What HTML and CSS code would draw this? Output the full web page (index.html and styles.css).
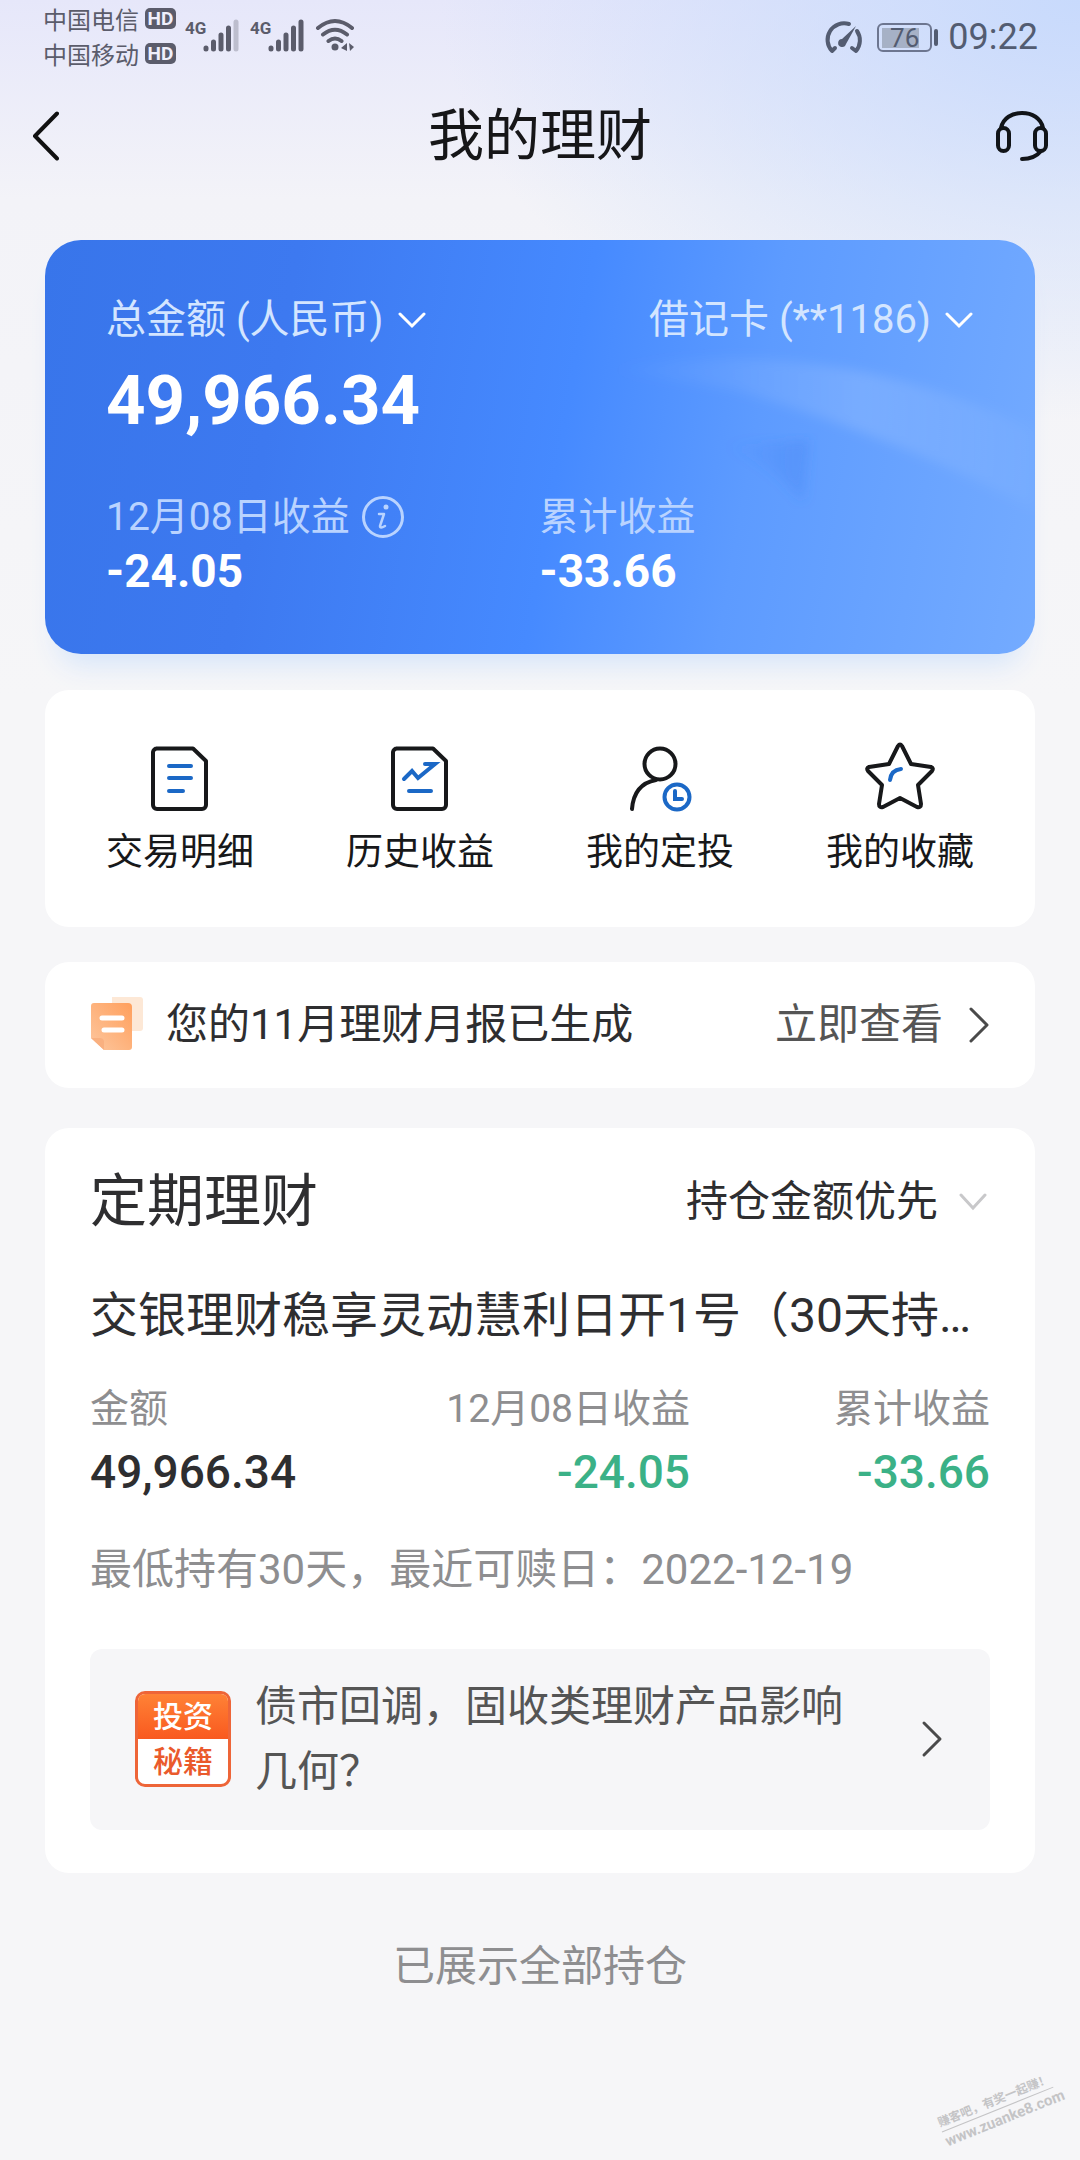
FILE: index.html
```html
<!DOCTYPE html>
<html lang="zh-CN">
<head>
<meta charset="utf-8">
<meta name="viewport" content="width=device-width, initial-scale=1">
<title>我的理财</title>
<link rel="stylesheet" href="styles.css">
</head>
<body>
<div class="status">
  <div class="carriers">
    <div class="carrier">中国电信 <span class="hd">HD</span></div>
    <div class="carrier">中国移动 <span class="hd">HD</span></div>
  </div>
  <div class="signals">
    <svg width="56" height="36" viewBox="0 0 56 36" aria-hidden="true">
      <text x="0" y="16" class="net">4G</text>
      <g stroke="#5b5c6b" stroke-width="5" stroke-linecap="round"><path d="M21 30v1M28.500 24v7M36 17v14M43.500 10v21"/><path d="M51 4v27" opacity=".3"/></g>
    </svg>
    <svg width="56" height="36" viewBox="0 0 56 36" aria-hidden="true">
      <text x="0" y="16" class="net">4G</text>
      <path d="M21 30v1M28.500 24v7M36 17v14M43.500 10v21M51 4v27" stroke="#5b5c6b" stroke-width="5" stroke-linecap="round"/>
    </svg>
    <svg width="42" height="36" viewBox="0 0 42 36" aria-hidden="true">
      <path d="M3 10Q20 -4 37 10M8 16.500Q20 7 32 16.500M13.500 23Q20 18 26.500 23" fill="none" stroke="#5b5c6b" stroke-width="4" stroke-linecap="round"/>
      <circle cx="20" cy="29" r="3.500" fill="#5b5c6b"/>
      <path d="M32 25v8l-6-3zM34 25l5 4-4 4z" fill="#5b5c6b"/>
    </svg>
  </div>
  <div class="power">
    <svg width="38" height="34" viewBox="0 0 38 34" aria-hidden="true">
      <path d="M24 4A16.500 16.500 0 0 0 7 31l3-3M32 11a16.500 16.500 0 0 1-1 20l-4-3" fill="none" stroke="#535c71" stroke-width="4" stroke-linecap="round" stroke-linejoin="round"/>
      <path d="M31 6L21 24a4 4 0 1 1-4-5z" fill="#535c71"/>
    </svg>
    <span class="battery"><span class="level">76</span></span>
    <span class="clock">09:22</span>
  </div>
</div>

<header class="top">
  <button class="icon-btn" aria-label="返回">
    <svg width="28" height="52" viewBox="0 0 28 52"><path d="M26 3.500L4 26l22 22.500" fill="none" stroke="#111" stroke-width="4" stroke-linecap="round" stroke-linejoin="round"/></svg>
  </button>
  <h1 class="title">我的理财</h1>
  <button class="icon-btn support" aria-label="客服">
    <svg width="54" height="52" viewBox="0 0 54 52"><g fill="none" stroke="#111418" stroke-width="4" stroke-linecap="round"><rect x="3" y="18" width="11" height="23" rx="5.500"/><rect x="40" y="18" width="11" height="23" rx="5.500"/><path d="M6 18C8 8 17 3 27 3s19 5 21 15M46 41c-4 5-11 8-19 8"/></g></svg>
  </button>
</header>

<main class="page">
  <section class="hero">
    <svg class="hero-art" viewBox="0 0 990 414" preserveAspectRatio="none" aria-hidden="true">
      <defs>
        <linearGradient id="beam" x1="0" x2="1"><stop offset="0" stop-color="#fff" stop-opacity="0"/><stop offset=".6" stop-color="#fff" stop-opacity=".13"/><stop offset="1" stop-color="#fff" stop-opacity=".03"/></linearGradient>
        <linearGradient id="shade" x1="0" x2="1"><stop offset="0" stop-color="#3c7df0" stop-opacity="0"/><stop offset="1" stop-color="#3c7df0" stop-opacity=".3"/></linearGradient>
        <filter id="soft"><feGaussianBlur stdDeviation="6"/></filter>
      </defs>
      <path d="M560 130Q780 90 990 190V270Q860 200 690 150Z" fill="url(#beam)" filter="url(#soft)"/>
      <path d="M680 206L764 200 758 262Q730 226 680 206Z" fill="url(#shade)" filter="url(#soft)"/>
    </svg>
    <div class="hero-row">
      <label class="pick"><select class="pick-field" aria-label="币种"><option>总金额 (人民币)</option></select>
        <svg width="28" height="18" viewBox="0 0 28 18"><path d="M2 3l12 12L26 3" fill="none" stroke="#fff" stroke-width="3" stroke-linecap="round"/></svg></label>
      <label class="pick"><select class="pick-field" aria-label="银行卡"><option>借记卡 (**1186)</option></select>
        <svg width="28" height="18" viewBox="0 0 28 18"><path d="M2 3l12 12L26 3" fill="none" stroke="#fff" stroke-width="3" stroke-linecap="round"/></svg></label>
    </div>
    <div class="total">49,966.34</div>
    <dl class="gains">
      <div><dt class="gain-name">12月08日收益
        <button class="icon-btn" aria-label="收益说明"><svg width="42" height="42" viewBox="0 0 42 42"><circle cx="21" cy="21" r="19.500" fill="none" stroke="#b9d3ff" stroke-width="3"/><circle cx="24" cy="11" r="2.500" fill="#b9d3ff"/><path d="M17 18h5l-4 12q0 3 5 0" fill="none" stroke="#b9d3ff" stroke-width="2.500" stroke-linecap="round" stroke-linejoin="round"/></svg></button></dt>
        <dd class="gain-value">-24.05</dd></div>
      <div><dt class="gain-name">累计收益</dt><dd class="gain-value">-33.66</dd></div>
    </dl>
  </section>

  <nav class="card actions">
    <a class="action" href="#">
      <svg width="72" height="72" viewBox="0 0 72 72"><path d="M12 6.500H49L62 19V63a4 4 0 0 1-4 4H13a4 4 0 0 1-4-4V10a4 4 0 0 1 4-3.500" fill="none" stroke="#17181a" stroke-width="4" stroke-linejoin="round"/><path d="M25 24h22M25 36h22M25 49h14" stroke="#1b68c6" stroke-width="4" stroke-linecap="round"/></svg>
      交易明细</a>
    <a class="action" href="#">
      <svg width="72" height="72" viewBox="0 0 72 72"><path d="M12 6.500H49L62 19V63a4 4 0 0 1-4 4H13a4 4 0 0 1-4-4V10a4 4 0 0 1 4-3.500" fill="none" stroke="#17181a" stroke-width="4" stroke-linejoin="round"/><path d="M20 37l8-8 6 7 17-14H41M25 49h22" fill="none" stroke="#1b68c6" stroke-width="4" stroke-linecap="round"/></svg>
      历史收益</a>
    <a class="action" href="#">
      <svg width="72" height="72" viewBox="0 0 72 72"><circle cx="36" cy="22" r="15.500" fill="none" stroke="#17181a" stroke-width="4"/><path d="M32 38Q10 42 8 67" fill="none" stroke="#17181a" stroke-width="4" stroke-linecap="round"/><circle cx="53" cy="55" r="12.500" fill="none" stroke="#1b68c6" stroke-width="4"/><path d="M51 49v8h7" fill="none" stroke="#1b68c6" stroke-width="4" stroke-linecap="round"/></svg>
      我的定投</a>
    <a class="action" href="#">
      <svg width="72" height="72" viewBox="0 0 72 72"><path d="M34 4Q36 1 38 4L47 22 67 25Q70 26 68 29L54 43 57 62Q57 66 53 65L36 56 19 65Q15 66 15 62L18 43 4 29Q2 26 5 25L25 22Z" fill="none" stroke="#17181a" stroke-width="4" stroke-linejoin="round"/><path d="M26 38q1-10 11-11" fill="none" stroke="#1b68c6" stroke-width="4" stroke-linecap="round"/></svg>
      我的收藏</a>
  </nav>

  <a class="card report" href="#">
    <svg width="54" height="56" viewBox="0 0 54 56" aria-hidden="true">
      <defs><linearGradient id="paper" x1="1" y1="0" x2="0" y2="1"><stop offset="0" stop-color="#ff9f5c"/><stop offset="1" stop-color="#fdc79f"/></linearGradient></defs>
      <path d="M22 0h28a3 3 0 0 1 3 3v28a3 3 0 0 1-3 3H22z" fill="#fde8d6"/>
      <path d="M4 6h34a4 4 0 0 1 4 4v40a3 3 0 0 1-3 3H14L1 41V9a3 3 0 0 1 3-3z" fill="url(#paper)"/>
      <path d="M1 41h9q3 0 4 3v9z" fill="#f9b080"/>
      <path d="M12 21h20M14 33h18" stroke="#fff" stroke-width="5" stroke-linecap="round"/>
    </svg>
    <span class="report-text">您的11月理财月报已生成</span>
    <span class="report-go">立即查看</span>
    <svg width="22" height="38" viewBox="0 0 22 38" aria-hidden="true"><path d="M3 3l16 16L3 35" fill="none" stroke="#4a4a4a" stroke-width="3" stroke-linecap="round" stroke-linejoin="round"/></svg>
  </a>

  <section class="card holdings">
    <div class="holdings-head">
      <h2 class="section-title">定期理财</h2>
      <label class="pick"><select class="pick-field sort" aria-label="排序"><option>持仓金额优先</option></select>
        <svg width="28" height="18" viewBox="0 0 28 18"><path d="M2 2l12 13L26 2" fill="none" stroke="#c8c8ca" stroke-width="3" stroke-linecap="round"/></svg></label>
    </div>
    <h3 class="product">交银理财稳享灵动慧利日开1号（30天持…</h3>
    <dl class="stats">
      <div class="stat"><dt class="stat-name">金额</dt><dd class="stat-value">49,966.34</dd></div>
      <div class="stat end"><dt class="stat-name">12月08日收益</dt><dd class="stat-value down">-24.05</dd></div>
      <div class="stat end"><dt class="stat-name">累计收益</dt><dd class="stat-value down">-33.66</dd></div>
    </dl>
    <p class="note">最低持有30天，最近可赎日：2022-12-19</p>
    <a class="advice" href="#">
      <span class="badge"><span class="badge-top">投资</span><span class="badge-bottom">秘籍</span></span>
      <span class="advice-text">债市回调，固收类理财产品影响几何？</span>
      <svg width="22" height="38" viewBox="0 0 22 38" aria-hidden="true"><path d="M3 3l16 16L3 35" fill="none" stroke="#4a4a4a" stroke-width="3" stroke-linecap="round" stroke-linejoin="round"/></svg>
    </a>
  </section>
  <p class="end-note">已展示全部持仓</p>
</main>
<div class="watermark"><span class="mark-line">赚客吧，有奖一起赚！</span><span class="mark-url">www.zuanke8.com</span></div>
</body>
</html>
```
FILE: styles.css
```css
* { box-sizing: border-box; }

body {
  margin: 0;
  min-height: 100vh;
  position: relative;
  font-family: Roboto, "Noto Sans CJK SC", sans-serif;
  font-size: 42px;
  color: #2e2e30;
  background:
    radial-gradient(ellipse 640px 420px at 100% 0, #c8dafc, rgba(200, 218, 252, 0)),
    linear-gradient(to bottom, #e6e7fa, #f3f3f8 200px, #f6f6f8 700px);
  background-color: #f6f6f8;
  background-repeat: no-repeat;
}

h1, h2, h3, p, dl, dd { margin: 0; font-weight: 400; }
a { color: inherit; text-decoration: none; }
svg { display: block; flex: none; }

.icon-btn { padding: 0; border: 0; background: none; }

.status {
  display: flex;
  align-items: flex-start;
  height: 74px;
  padding: 0 42px 0 43px;
  color: #5b5c6b;
}
.carrier {
  display: flex;
  align-items: center;
  gap: 6px;
  height: 35px;
  padding-top: 2px;
  font-size: 24px;
}
.hd {
  width: 31px;
  border-radius: 5px;
  background: #5b5c6b;
  color: #f0f0fb;
  font-size: 19px;
  line-height: 21px;
  font-weight: 700;
  text-align: center;
}
.signals { display: flex; gap: 9px; margin: 18px 0 0 9px; }
.net { font: 700 17px Roboto, sans-serif; fill: #5b5c6b; }
.power { display: flex; align-items: center; margin: 16px 0 0 auto; color: #535c71; }
.battery {
  position: relative;
  width: 55px;
  height: 29px;
  margin: 0 16px 0 14px;
  padding: 3px;
  border: 2px solid #6d7690;
  border-radius: 6px;
}
.battery::after {
  content: "";
  position: absolute;
  right: -8px;
  top: 4px;
  width: 4px;
  height: 17px;
  border-radius: 2px;
  background: #535c71;
}
.level {
  display: block;
  width: 37px;
  background: #a6b1c6;
  font-size: 26px;
  line-height: 20px;
  text-align: right;
}
.clock { font-size: 36px; line-height: 42px; }

.top {
  display: grid;
  grid-template-columns: 1fr auto 1fr;
  align-items: center;
  justify-items: start;
  height: 124px;
  padding: 0 31px;
}
.support { justify-self: end; }
.title { color: #161618; font-size: 56px; line-height: 80px; }

.page {
  display: flex;
  flex-direction: column;
  padding: 42px 45px 0;
}

.hero {
  position: relative;
  padding: 50px 62px 56px 61px;
  border-radius: 36px;
  background: linear-gradient(100deg, #3875ea, #3d79f0 24%, #468aff 52%, #5d9bff 70%, #74abff);
  box-shadow: 0 24px 28px -14px #d5e5fa;
  color: #fff;
}
.hero-art { position: absolute; inset: 0; width: 100%; height: 100%; border-radius: 36px; }
.hero-row, .total, .gains { position: relative; }
.hero-row { display: flex; justify-content: space-between; }
.pick { display: flex; align-items: center; gap: 14px; }
.pick-field {
  appearance: none;
  padding: 0;
  border: 0;
  background: none;
  color: #d3e5ff;
  font: 400 40px/60px Roboto, "Noto Sans CJK SC", sans-serif;
}
.total { margin-top: 6px; font-size: 69px; line-height: 90px; font-weight: 700; }
.gains { display: grid; grid-template-columns: 1fr 1fr; margin-top: 44px; }
.gain-name {
  display: flex;
  align-items: center;
  gap: 12px;
  color: #b9d3ff;
  font-size: 39px;
  line-height: 54px;
}
.gain-value { font-size: 46px; line-height: 54px; font-weight: 700; }

.card { border-radius: 24px; background: #fff; }

.actions {
  display: grid;
  grid-template-columns: repeat(4, 1fr);
  margin-top: 36px;
  padding: 52px 15px 48px;
}
.action {
  display: flex;
  flex-direction: column;
  align-items: center;
  gap: 13px;
  color: #17181a;
  font-size: 37px;
  line-height: 52px;
}

.report {
  display: flex;
  align-items: center;
  margin-top: 35px;
  padding: 33px 45px;
  line-height: 60px;
}
.report-text { margin-left: 22px; }
.report-go { margin: 0 25px 0 auto; color: #555; }

.holdings { margin-top: 40px; padding: 36px 45px 43px; }
.holdings-head { display: flex; align-items: center; justify-content: space-between; }
.section-title { font-size: 57px; line-height: 76px; }
.holdings-head .pick { gap: 20px; padding-right: 3px; }
.sort { color: #2e2e30; font-size: 42px; }
.product {
  margin-top: 40px;
  font-size: 48px;
  line-height: 72px;
}
.stats { display: grid; grid-template-columns: repeat(3, 1fr); margin-top: 30px; }
.end { text-align: right; }
.stat-name { color: #8e8e90; font-size: 39px; line-height: 54px; }
.stat-value { margin-top: 6px; font-size: 46px; line-height: 60px; font-weight: 500; }
.down { color: #3bb187; }
.note { margin-top: 38px; color: #8e8e90; line-height: 60px; }

.advice {
  display: flex;
  align-items: center;
  margin-top: 49px;
  padding: 25px 47px 26px 45px;
  border-radius: 12px;
  background: #f6f6f8;
  color: #555;
}
.badge {
  flex: none;
  width: 96px;
  overflow: hidden;
  border: 3px solid #ee6538;
  border-radius: 10px;
  background: #fff;
  font-size: 30px;
  font-weight: 500;
  line-height: 45px;
  text-align: center;
}
.badge-top, .badge-bottom { display: block; }
.badge-top { background: linear-gradient(#ff8236, #f9591f); color: #fff; }
.badge-bottom { color: #ea5a2c; }
.advice-text { flex: 1; margin: 0 60px 0 24px; line-height: 65px; }

.end-note {
  margin-top: 64px;
  color: #8e8e90;
  line-height: 60px;
  text-align: center;
}

.watermark {
  position: absolute;
  right: 22px;
  bottom: 30px;
  width: 120px;
  transform: rotate(-22deg);
  color: #c4c4c6;
  font-weight: 700;
  text-align: center;
  white-space: nowrap;
}
.mark-line {
  display: block;
  border-bottom: 1px solid #c4c4c6;
  font-size: 12px;
  line-height: 18px;
}
.mark-url { display: block; font-size: 15px; line-height: 20px; }
```
